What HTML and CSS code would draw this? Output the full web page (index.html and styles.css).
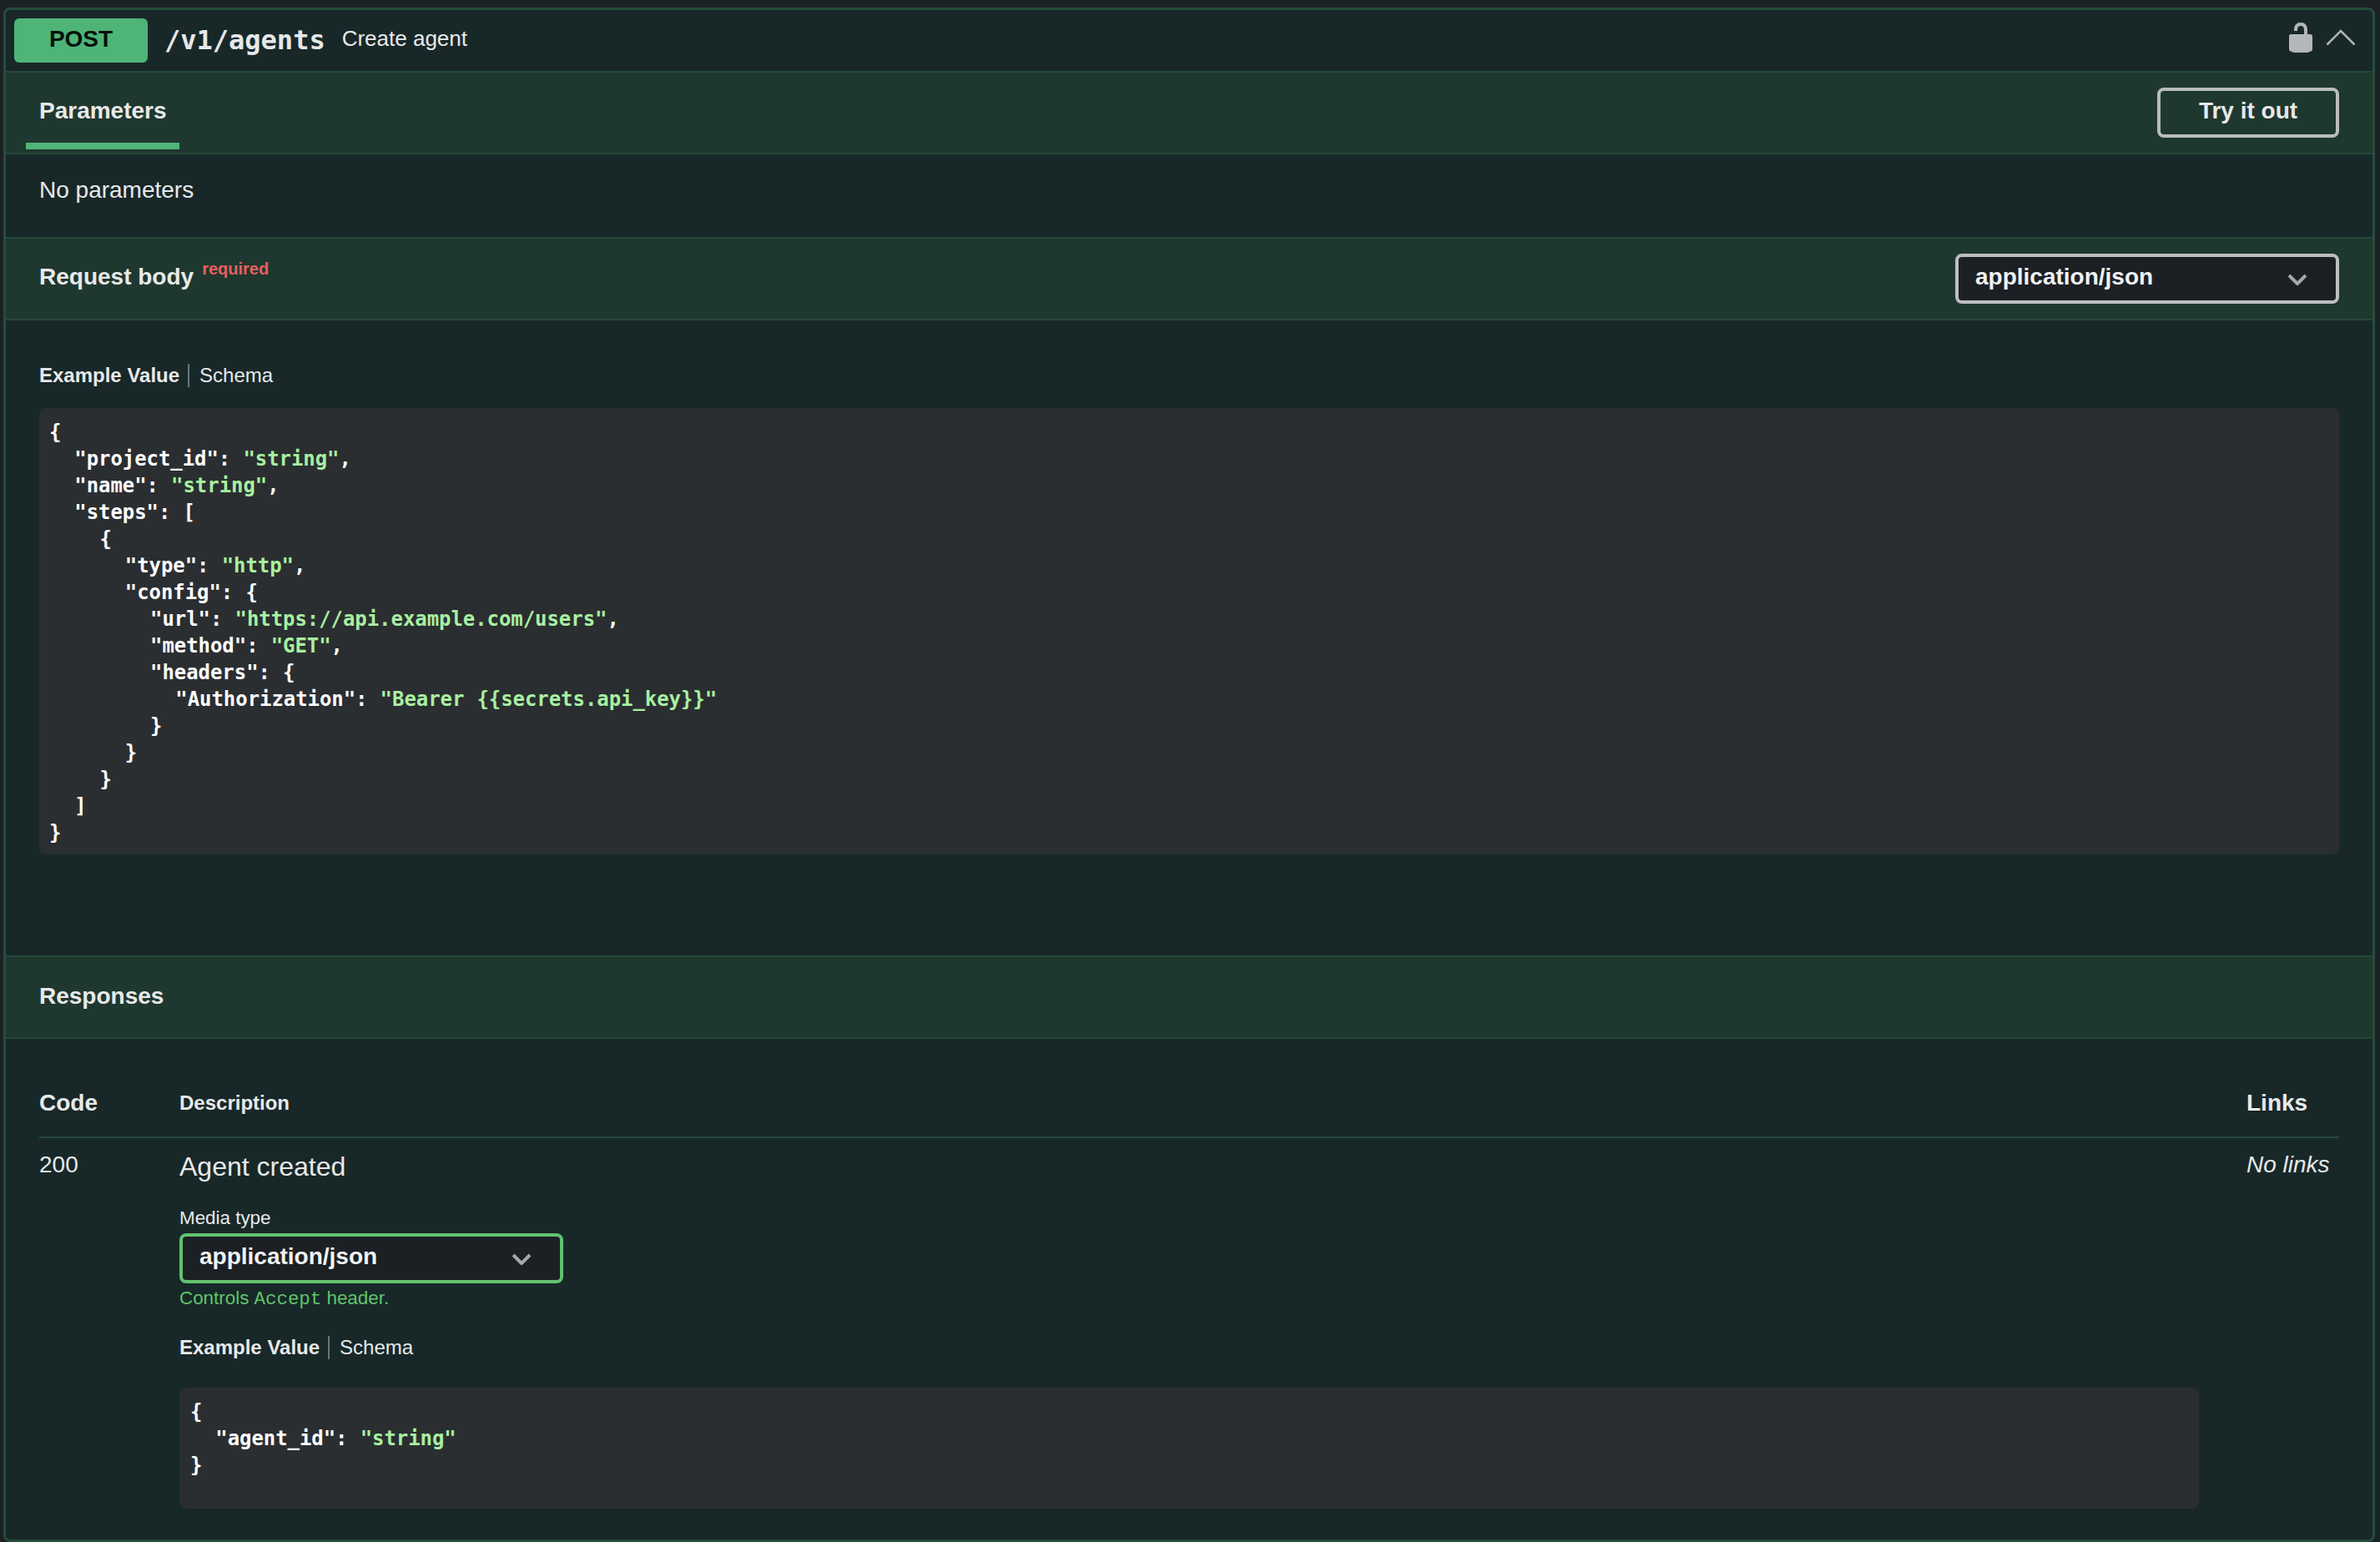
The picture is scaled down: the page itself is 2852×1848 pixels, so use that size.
FILE: index.html
```html
<!DOCTYPE html>
<html lang="en">
<head>
<meta charset="utf-8">
<title>POST /v1/agents</title>
<link rel="stylesheet" href="styles.css">
</head>
<body>
<div class="card">
  <header class="summary">
    <span class="badge">POST</span>
    <span class="path">/v1/agents</span>
    <span class="summary-desc">Create agent</span>
    <span class="summary-icons">
      <svg class="lock" viewBox="0 0 20 20" width="40" height="40"><path d="M15.8 8H14V5.6C14 2.703 12.665 1 10 1 7.334 1 6 2.703 6 5.6V6h2v-.801C8 3.754 8.797 3 10 3c1.203 0 2 .754 2 2.199V8H4c-.553 0-1 .646-1 1.199V17c0 .549.428 1.139.951 1.307l1.197.387C5.672 18.861 6.55 19 7.1 19h5.8c.549 0 1.428-.139 1.951-.307l1.196-.387c.524-.167.953-.757.953-1.306V9.199C17 8.646 16.352 8 15.8 8z"/></svg>
      <svg class="arrow" viewBox="0 0 36 20" width="36" height="20"><path d="M1.5 18.5 18 2l16.5 16.5"/></svg>
    </span>
  </header>

  <div class="section-head tabbed">
    <div class="tab">Parameters</div>
    <button class="try">Try it out</button>
  </div>
  <div class="no-params">No parameters</div>

  <div class="section-head">
    <div class="title">Request body<span class="required">required</span></div>
    <div class="select select-wide">
      <span>application/json</span>
      <svg class="chev" viewBox="0 0 24 14" width="24" height="14"><path d="M2 2l10 10L22 2"/></svg>
    </div>
  </div>

  <div class="request">
    <div class="tabs"><span class="active">Example Value</span><span class="other">Schema</span></div>
<pre class="code code-large">{
  "project_id": <i>"string"</i>,
  "name": <i>"string"</i>,
  "steps": [
    {
      "type": <i>"http"</i>,
      "config": {
        "url": <i>"https://api.example.com/users"</i>,
        "method": <i>"GET"</i>,
        "headers": {
          "Authorization": <i>"Bearer {{secrets.api_key}}"</i>
        }
      }
    }
  ]
}</pre>
  </div>

  <div class="section-head">
    <div class="title title-resp">Responses</div>
  </div>

  <div class="responses">
    <div class="grid grid-head">
      <div class="th-big">Code</div>
      <div class="th-small">Description</div>
      <div class="th-big">Links</div>
    </div>
    <div class="grid grid-row">
      <div class="status">200</div>
      <div class="desc">
        <div class="created">Agent created</div>
        <div class="media-label">Media type</div>
        <div class="select select-green">
          <span>application/json</span>
          <svg class="chev" viewBox="0 0 24 14" width="24" height="14"><path d="M2 2l10 10L22 2"/></svg>
        </div>
        <div class="accept">Controls <code>Accept</code> header.</div>
        <div class="tabs tabs-small"><span class="active">Example Value</span><span class="other">Schema</span></div>
<pre class="code code-small">{
  "agent_id": <i>"string"</i>
}</pre>
      </div>
      <div class="nolinks">No links</div>
    </div>
  </div>
</div>
</body>
</html>
```
FILE: styles.css
```css
* { box-sizing: border-box; }
html, body { margin: 0; height: 100%; }
body {
  background: #1c2126;
  padding: 9px 6px 0 4px;
  font-family: "Liberation Sans", Arial, sans-serif;
  color: #e8e9e9;
  overflow: hidden;
}
.card {
  background: #182829;
  border: 3px solid #264d3a;
  border-radius: 8px;
  height: 1839px;
}
.summary {
  display: flex;
  align-items: center;
  height: 73px;
  padding: 0 20px 0 10px;
}
.badge {
  width: 160px;
  height: 53px;
  background: #4fb477;
  border-radius: 6px;
  color: #04100a;
  font-size: 28px;
  font-weight: 700;
  display: flex;
  align-items: center;
  justify-content: center;
  padding-bottom: 4px;
}
.path {
  font-family: "DejaVu Sans Mono", monospace;
  font-size: 32px;
  font-weight: 700;
  margin-left: 20px;
  padding-bottom: 2px;
  color: #e6e8e8;
}
.summary-desc { font-size: 26px; margin-left: 20px; padding-bottom: 4px; }
.summary-icons { margin-left: auto; display: flex; align-items: center; gap: 10px; padding-bottom: 8px; }
.lock { fill: #b4b7ba; display: block; }
.arrow { fill: none; stroke: #b0b3b6; stroke-width: 2.5; display: block; }

.section-head {
  height: 100px;
  background: #1f382f;
  border-top: 2px solid #25483a;
  border-bottom: 2px solid #25483a;
  display: flex;
  align-items: center;
  justify-content: space-between;
  padding: 0 40px;
}
.section-head.tabbed { align-items: stretch; padding-left: 24px; }
.tab {
  width: 184px;
  padding: 30px 16px 0;
  font-size: 28px;
  font-weight: 700;
  border-bottom: 8px solid #4fb477;
  margin-bottom: 4px;
}
.try {
  align-self: center;
  width: 218px;
  height: 60px;
  background: transparent;
  border: 4px solid #b9bcbe;
  border-radius: 8px;
  color: #e8e9e9;
  font: 700 28px "Liberation Sans", Arial, sans-serif;
  padding: 0 0 4px;
}
.no-params { height: 99px; padding: 27px 40px 0; font-size: 28px; }

.title { font-size: 28px; font-weight: 700; padding-bottom: 4px; }
.title-resp { padding-bottom: 2px; margin-top: -1px; }
.required {
  font-size: 20px;
  color: #e8605f;
  margin-left: 10px;
  position: relative;
  top: -12px;
}
.select {
  height: 60px;
  display: flex;
  align-items: center;
  justify-content: space-between;
  background: #1c2024;
  border: 4px solid #bcbfc1;
  border-radius: 8px;
  font-size: 28px;
  font-weight: 700;
  color: #f1f2f2;
  padding: 0 34px 4px 20px;
}
.select-wide { width: 460px; }
.select-green { width: 460px; border-color: #63c26f; margin-top: 4px; }
.chev { fill: none; stroke: #a5a7a9; stroke-width: 4; margin-top: 6px; display: block; }

.request { height: 761px; padding: 52px 40px 0; }
.tabs { font-size: 24px; display: flex; align-items: center; height: 28px; }
.tabs .active { font-weight: 700; padding-right: 10px; border-right: 2px solid #6b7675; }
.tabs .other { padding-left: 12px; }
.code {
  margin: 0;
  background: #2b2e31;
  border-radius: 8px;
  color: #fff;
  font-family: "DejaVu Sans Mono", monospace;
  font-size: 23.9px;
  font-weight: 700;
  line-height: 32px;
  word-spacing: 0.75px;
}
.code i { font-style: normal; color: #a8f0a0; }
.code-large { margin-top: 25px; padding: 13px 12px 10px; }
.code-small { margin-top: 34px; width: 2420px; padding: 13px 13px 36px; }

.responses { padding: 0 40px; }
.grid { display: grid; grid-template-columns: 168px 2477px 1fr; }
.grid-head {
  height: 119px;
  align-items: end;
  padding-bottom: 26px;
  border-bottom: 2px solid #25483a;
}
.th-big { font-size: 28px; font-weight: 700; margin-bottom: -2px; }
.th-small { font-size: 24px; font-weight: 700; }
.grid-row { padding-top: 16px; }
.status { font-size: 28px; }
.created { font-size: 32px; line-height: 38px; margin-top: -1px; }
.media-label { font-size: 22.4px; margin-top: 29px; line-height: 28px; }
.accept { font-size: 22.4px; color: #61c46b; line-height: 28px; margin-top: 4px; }
.accept code { font-family: "Liberation Mono", monospace; font-size: 22.4px; }
.tabs-small { margin-top: 30px; }
.nolinks { font-size: 28px; font-style: italic; white-space: nowrap; }
```
